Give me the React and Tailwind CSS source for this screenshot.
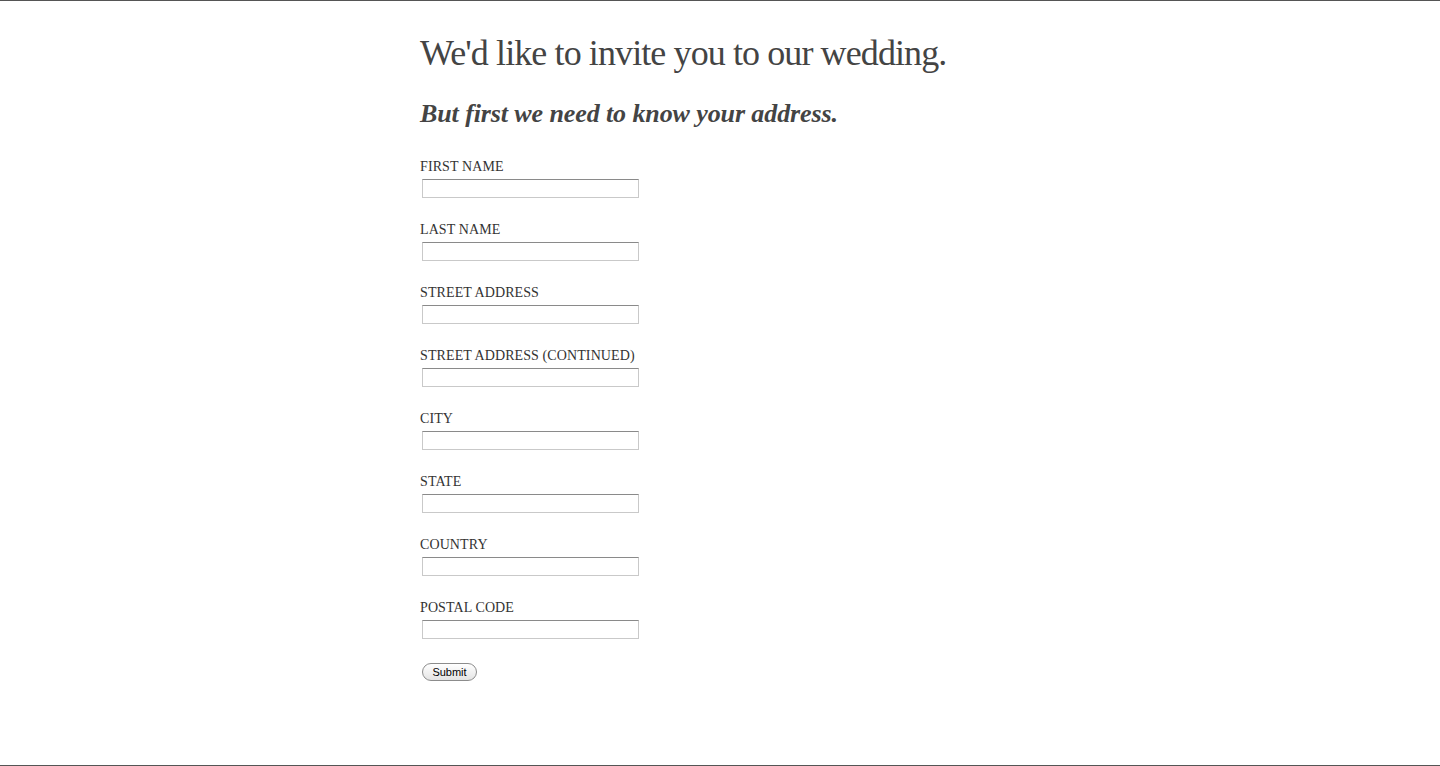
export default function App() {
  const fields = [
    "FIRST NAME",
    "LAST NAME",
    "STREET ADDRESS",
    "STREET ADDRESS (CONTINUED)",
    "CITY",
    "STATE",
    "COUNTRY",
    "POSTAL CODE",
  ];
  return (
    <div className="min-h-[766px] h-[766px] bg-white border-t border-b border-[#555] font-['Liberation_Serif',serif] text-[#444]">
      <div className="w-[600px] mx-auto">
        <h1 className="mt-[32px] text-[36px] leading-[40px] font-normal text-[#444] tracking-[-0.9px] whitespace-nowrap">
          We'd like to invite you to our wedding.
        </h1>
        <h2 className="mt-[26px] text-[26px] leading-[30px] font-bold italic text-[#444] tracking-[-0.1px] whitespace-nowrap">
          But first we need to know your address.
        </h2>
        <form className="mt-[29px] flex flex-col gap-[23px]">
          {fields.map((f) => (
            <div key={f} className="flex flex-col">
              <label className="pt-[1px] text-[14px] leading-[16px] text-[#333] tracking-[0.1px]">{f}</label>
              <input
                type="text"
                className="mt-[4px] ml-[2px] w-[217px] h-[19px] border border-[#c9c9c9] border-t-[#8a8a8a] bg-white outline-none"
              />
            </div>
          ))}
          <div className="-mt-[3px]">
            <button
              type="button"
              className="ml-[2px] w-[55px] h-[18px] rounded-full border border-[#8c8c8c] bg-gradient-to-b from-white to-[#e4e4e4] text-[11px] leading-[16px] text-black font-['Liberation_Sans',sans-serif]"
            >
              Submit
            </button>
          </div>
        </form>
      </div>
    </div>
  );
}
